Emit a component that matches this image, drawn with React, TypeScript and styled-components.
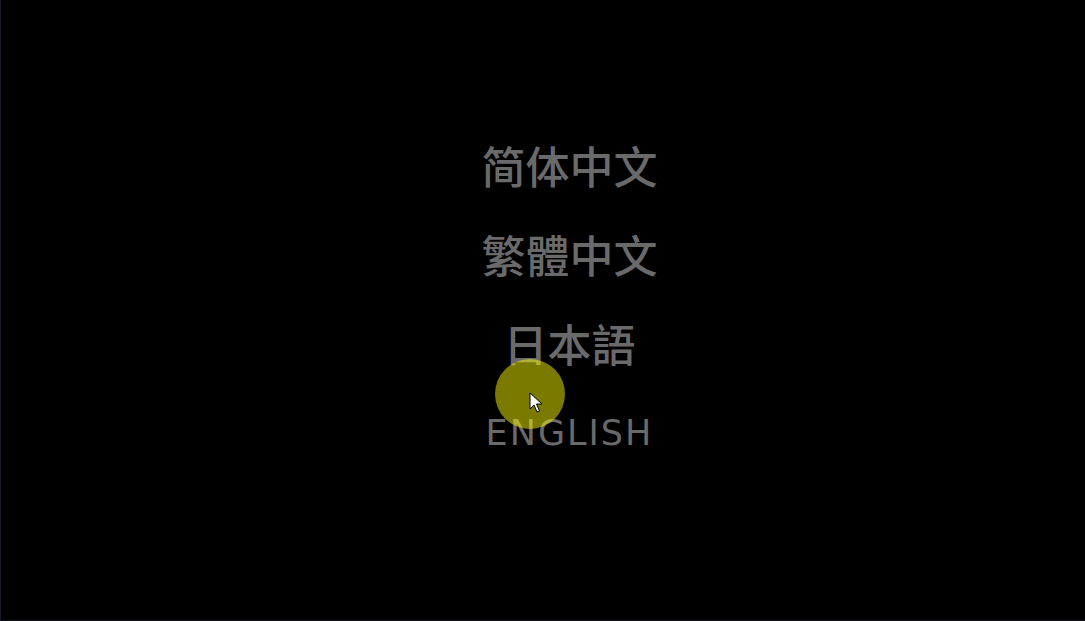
import styled, { createGlobalStyle } from 'styled-components';

const GlobalStyle = createGlobalStyle`
  html, body {
    margin: 0;
    padding: 0;
    background: #000;
  }
  #root {
    height: 100vh;
  }
`;

const Screen = styled.div`
  position: relative;
  box-sizing: border-box;
  width: 100%;
  height: 100%;
  background: #000;
  border-left: 1px solid #1b1a2b;
  border-bottom: 1px solid #141320;
  overflow: hidden;
`;

const Menu = styled.ul`
  list-style: none;
  margin: 0;
  padding: 120px 0 0 53px;
  display: flex;
  flex-direction: column;
  align-items: center;
`;

const Option = styled.li<{ latin?: boolean }>`
  height: 89px;
  display: flex;
  align-items: center;
  justify-content: center;
  color: #6a6a6a;
  cursor: pointer;
  font-family: ${(p) =>
    p.latin
      ? '"DejaVu Sans", "Liberation Sans", sans-serif'
      : '"Noto Sans CJK SC", "Noto Sans CJK JP", sans-serif'};
  font-size: ${(p) => (p.latin ? '35px' : '44px')};
  font-weight: ${(p) => (p.latin ? 500 : 500)};
  letter-spacing: ${(p) => (p.latin ? '2px' : '0')};
  margin-top: ${(p) => (p.latin ? '1px' : '0')};
`;

const Highlight = styled.div`
  position: absolute;
  left: 494px;
  top: 359px;
  width: 70px;
  height: 70px;
  border-radius: 50%;
  background: rgba(255, 255, 0, 0.48);
  pointer-events: none;
`;

const Pointer = styled.svg`
  position: absolute;
  left: 528px;
  top: 392px;
  pointer-events: none;
`;

const languages = [
  { label: '简体中文' },
  { label: '繁體中文' },
  { label: '日本語' },
  { label: 'ENGLISH', latin: true },
];

export default function App() {
  return (
    <>
      <GlobalStyle />
      <Screen>
        <Menu>
          {languages.map((l) => (
            <Option key={l.label} latin={l.latin}>
              {l.label}
            </Option>
          ))}
        </Menu>
        <Highlight />
        <Pointer width="14" height="22" viewBox="0 0 14 22">
          <path
            d="M1 1 L1 17 L5 13 L8 20 L10.5 19 L7.5 12 L13 12 Z"
            fill="#fff"
            stroke="#000"
            strokeWidth="1"
            strokeLinejoin="round"
          />
        </Pointer>
      </Screen>
    </>
  );
}
